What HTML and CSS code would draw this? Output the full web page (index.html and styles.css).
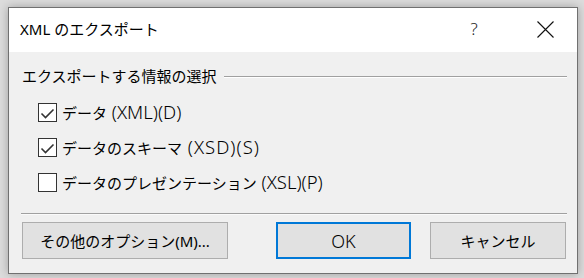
FILE: index.html
```html
<!DOCTYPE html>
<html lang="ja">
<head>
<meta charset="utf-8">
<title>XML のエクスポート</title>
<link rel="stylesheet" href="styles.css">
</head>
<body>
<div class="window">
  <div class="titlebar">
    <div class="title">XML のエクスポート</div>
    <div class="tb-help">?</div>
    <div class="tb-close">
      <svg width="17" height="17" viewBox="0 0 17 17"><path d="M0.5 0.5 L16.5 16.5 M16.5 0.5 L0.5 16.5" stroke="#111" stroke-width="1.1" fill="none"/></svg>
    </div>
  </div>
  <div class="content">
    <div class="group-head">
      <span class="group-label">エクスポートする情報の選択</span>
      <span class="group-line"></span>
    </div>
    <div class="options">
      <div class="opt">
        <span class="box"><svg width="17" height="17" viewBox="0 0 17 17"><polyline points="2.5,9.5 6.5,13.5 14.5,5.5" fill="none" stroke="#333" stroke-width="1.6"/></svg></span>
        <span class="opt-text">データ<span class="lat"> (XML)(D)</span></span>
      </div>
      <div class="opt">
        <span class="box"><svg width="17" height="17" viewBox="0 0 17 17"><polyline points="2.5,9.5 6.5,13.5 14.5,5.5" fill="none" stroke="#333" stroke-width="1.6"/></svg></span>
        <span class="opt-text">データのスキーマ<span class="lat lat-wide"> (XSD)(S)</span></span>
      </div>
      <div class="opt">
        <span class="box"></span>
        <span class="opt-text">データのプレゼンテーション<span class="lat"> (XSL)(P)</span></span>
      </div>
    </div>
    <div class="footer-sep"></div>
    <div class="buttons">
      <div class="btn btn-more">その他のオプション(M)...</div>
      <div class="btn btn-ok"><span class="lat-ok">OK</span></div>
      <div class="btn btn-cancel">キャンセル</div>
    </div>
  </div>
</div>
</body>
</html>
```
FILE: styles.css
```css
html, body {
  margin: 0;
  padding: 0;
}
body {
  width: 584px;
  height: 278px;
  background: #dcdcdc;
  padding: 7px 0 0 8px;
  box-sizing: border-box;
  font-family: "Noto Sans", "Noto Sans CJK JP", sans-serif;
  font-size: 15px;
  color: #000;
  overflow: hidden;
}
.window {
  width: 570px;
  height: 267px;
  box-sizing: border-box;
  border: 1px solid #707070;
  background: #f0f0f0;
  box-shadow: 0 0 9px rgba(0, 0, 0, 0.28);
  display: flex;
  flex-direction: column;
}
.titlebar {
  height: 44px;
  background: #fff;
  display: flex;
  align-items: center;
  flex-shrink: 0;
}
.title {
  padding-left: 11px;
  line-height: 20px;
  flex: 1;
  margin-top: -2px;
}
.tb-help {
  width: 46px;
  text-align: center;
  font-size: 17px;
  font-weight: 300;
  color: #222;
  line-height: 20px;
  margin-top: -2px;
}
.tb-close {
  width: 46px;
  margin-left: 25px;
  margin-right: 9px;
  display: flex;
  justify-content: center;
  align-items: center;
  margin-top: -2px;
}
.content {
  flex: 1;
  padding: 14px 10px 13px 12px;
  display: flex;
  flex-direction: column;
}
.group-head {
  display: flex;
  align-items: center;
  height: 20px;
  line-height: 20px;
  padding-left: 1px;
}
.group-label {
  margin-right: 7px;
}
.group-line {
  flex: 1;
  height: 0;
  border-top: 1px solid #a0a0a0;
  border-bottom: 1px solid #ffffff;
  margin-top: 1px;
}
.options {
  margin-top: 9px;
  padding-left: 17px;
  display: flex;
  flex-direction: column;
}
.opt {
  height: 35px;
  display: flex;
  align-items: center;
}
.box {
  width: 19px;
  height: 19px;
  box-sizing: border-box;
  border: 1px solid #333;
  background: #fff;
  display: flex;
  flex-shrink: 0;
}
.opt-text {
  margin-left: 5px;
  line-height: 20px;
  margin-top: -1px;
  white-space: nowrap;
}
.lat {
  font-size: 18.5px;
  font-weight: 300;
  line-height: 20px;
}
.lat-wide {
  letter-spacing: 1px;
}
.lat-ok {
  font-size: 18px;
  font-weight: 300;
}
.footer-sep {
  margin-top: 13px;
  height: 0;
  border-top: 1px solid #a0a0a0;
  border-bottom: 1px solid #fafafa;
}
.buttons {
  margin-top: 7px;
  display: flex;
  padding-left: 1px;
}
.btn {
  height: 37px;
  box-sizing: border-box;
  border: 1px solid #adadad;
  background: #e1e1e1;
  display: flex;
  align-items: center;
  justify-content: center;
  line-height: 20px;
}
.btn-more {
  width: 206px;
}
.btn-ok {
  width: 135px;
  margin-left: 48px;
  border: 2px solid #0078d7;
}
.btn-cancel {
  width: 136px;
  margin-left: 19px;
}
```
